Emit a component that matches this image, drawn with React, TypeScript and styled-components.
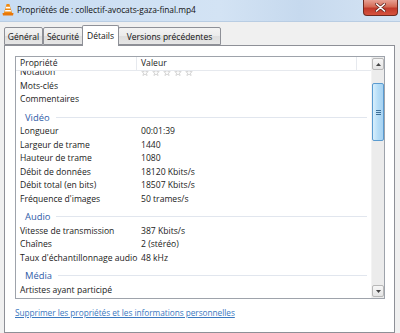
import styled, { createGlobalStyle } from 'styled-components';

const GlobalStyle = createGlobalStyle`
  html, body {
    margin: 0;
    padding: 0;
    background: #f0f0f0;
  }
  body {
    font-family: 'Open Sans', 'Segoe UI', sans-serif;
    color: #1a1a1a;
  }
`;

const Window = styled.div`
  width: 400px;
  height: 333px;
  overflow: hidden;
  display: flex;
  flex-direction: column;
  background: #f0f0f0;
`;

const TitleBar = styled.div`
  height: 21px;
  flex: none;
  display: flex;
  align-items: flex-start;
  background: linear-gradient(to right, #c8dcf2 0%, #d3e3f4 55%, #c6d9ee 75%, #d5e4f4 100%);
  border-bottom: 1px solid #b9cde3;
`;

const AppIcon = styled.svg`
  width: 12px;
  height: 13px;
  margin: 3px 3px 0 2px;
  flex: none;
`;

const Title = styled.div`
  font-size: 8.4px;
  letter-spacing: -0.05px;
  line-height: 20px;
  color: #111;
  flex: 1;
  white-space: nowrap;
`;

const CloseButton = styled.div`
  width: 35px;
  height: 16px;
  margin-right: 2px;
  border: 1px solid #6e2a20;
  border-top: none;
  border-radius: 0 0 4px 4px;
  background: linear-gradient(to bottom, #e7a194 0%, #d46a55 45%, #c1392a 55%, #d5533f 100%);
  display: flex;
  align-items: center;
  justify-content: center;
  box-sizing: border-box;
`;

const Body = styled.div`
  flex: 1;
  display: flex;
  flex-direction: column;
  padding: 3px 4px 0 4px;
  min-height: 0;
`;

const TabStrip = styled.div`
  display: flex;
  align-items: flex-end;
  height: 20px;
  flex: none;
  position: relative;
  z-index: 1;
`;

const Tab = styled.div<{ $active?: boolean; $width: number }>`
  box-sizing: border-box;
  width: ${({ $width }) => $width}px;
  height: ${({ $active }) => ($active ? '21px' : '18px')};
  margin-bottom: ${({ $active }) => ($active ? '-1px' : '0')};
  padding-top: ${({ $active }) => ($active ? '3px' : '2px')};
  margin-left: ${({ $active }) => ($active ? '-1px' : '0')};
  margin-right: ${({ $active }) => ($active ? '-1px' : '0')};
  border: 1px solid #8e9097;
  border-bottom: ${({ $active }) => ($active ? 'none' : '1px solid #8e9097')};
  border-radius: 2px 2px 0 0;
  background: ${({ $active }) =>
    $active ? '#ffffff' : 'linear-gradient(to bottom, #f3f3f3 0%, #ebebeb 50%, #dedede 51%, #e6e6e6 100%)'};
  font-size: 8.5px;
  line-height: 13px;
  text-align: center;
  color: #111;
  white-space: nowrap;
  position: relative;
  z-index: ${({ $active }) => ($active ? 2 : 1)};
`;

const TabPanel = styled.div`
  flex: 1;
  margin-right: 1px;
  background: #ffffff;
  border: 1px solid #8e9097;
  padding: 10px 9px 0 10px;
  display: flex;
  flex-direction: column;
`;

const ListView = styled.div`
  height: 243px;
  box-sizing: border-box;
  border: 1px solid #9ea3ab;
  display: flex;
  flex: none;
`;

const ListMain = styled.div`
  flex: 1;
  display: flex;
  flex-direction: column;
  min-width: 0;
`;

const Header = styled.div`
  height: 13px;
  flex: none;
  display: grid;
  grid-template-columns: 121px 220px;
  border-bottom: 1px solid #e6e9ee;
  background: #fff;
  position: relative;
  z-index: 1;
`;

const HeaderCell = styled.div`
  font-size: 8.6px;
  line-height: 13px;
  padding-left: 4px;
  border-right: 1px solid #e6e9ee;
  color: #222;
`;

const ListBody = styled.div`
  flex: 1;
  overflow: hidden;
`;

const ListContent = styled.div`
  margin-top: -5px;
`;

const Row = styled.div`
  height: 13.5px;
  display: grid;
  grid-template-columns: 121px 1fr;
  padding-left: 4px;
  font-size: 8.6px;
  line-height: 13.5px;
  color: #1a1a1a;
  white-space: nowrap;
`;

const Value = styled.div`
  display: flex;
  align-items: center;
  gap: 3px;
`;

const GroupRow = styled.div`
  height: 18.5px;
  box-sizing: border-box;
  padding: 4px 4px 0 9px;
  display: flex;
  align-items: flex-start;
`;

const GroupLabel = styled.span`
  font-size: 9.4px;
  line-height: 13px;
  color: #2f5ca8;
`;

const GroupLine = styled.div`
  flex: 1;
  height: 1px;
  margin: 6px 0 0 6px;
  background: #e1e6ee;
`;

const ScrollBar = styled.div`
  width: 13px;
  flex: none;
  background: #ececec;
  border-left: 1px solid #f3f3f3;
  display: flex;
  flex-direction: column;
  padding: 1px 0;
  box-sizing: border-box;
`;

const ScrollButton = styled.div`
  height: 12px;
  flex: none;
  box-sizing: border-box;
  border: 1px solid #b8b8b8;
  border-radius: 2px;
  background: linear-gradient(to bottom, #f7f7f7, #e4e4e4);
  display: flex;
  align-items: center;
  justify-content: center;
`;

const Track = styled.div`
  flex: 1;
  display: flex;
  flex-direction: column;
`;

const Thumb = styled.div`
  margin-top: 13px;
  height: 58px;
  box-sizing: border-box;
  border: 1px solid #5a9bd0;
  border-radius: 2px;
  background: linear-gradient(to right, #d8effc, #b5ddf7 50%, #a8d3f2);
  display: flex;
  flex-direction: column;
  align-items: center;
  justify-content: center;
  gap: 1px;
`;

const Grip = styled.div`
  width: 5px;
  height: 1px;
  background: #3e6f98;
`;

const Link = styled.a`
  margin-top: 7px;
  font-size: 8.3px;
  letter-spacing: -0.05px;
  line-height: 13px;
  color: #3a78bf;
  text-decoration: underline;
  white-space: nowrap;
`;

const Star = () => (
  <svg width="8" height="7" viewBox="0 0 10 9">
    <path
      d="M5 0.6 L6.2 3.3 L9.2 3.4 L6.8 5.3 L7.7 8.4 L5 6.7 L2.3 8.4 L3.2 5.3 L0.8 3.4 L3.8 3.3 Z"
      fill="#fafafa"
      stroke="#c9c9c9"
      strokeWidth="0.9"
    />
  </svg>
);

type Item = { kind: 'row'; label: string; value?: string; stars?: boolean } | { kind: 'group'; label: string };

const items: Item[] = [
  { kind: 'row', label: 'Notation', stars: true },
  { kind: 'row', label: 'Mots-clés' },
  { kind: 'row', label: 'Commentaires' },
  { kind: 'group', label: 'Vidéo' },
  { kind: 'row', label: 'Longueur', value: '00:01:39' },
  { kind: 'row', label: 'Largeur de trame', value: '1440' },
  { kind: 'row', label: 'Hauteur de trame', value: '1080' },
  { kind: 'row', label: 'Débit de données', value: '18120 Kbits/s' },
  { kind: 'row', label: 'Débit total (en bits)', value: '18507 Kbits/s' },
  { kind: 'row', label: "Fréquence d'images", value: '50 trames/s' },
  { kind: 'group', label: 'Audio' },
  { kind: 'row', label: 'Vitesse de transmission', value: '387 Kbits/s' },
  { kind: 'row', label: 'Chaînes', value: '2 (stéréo)' },
  { kind: 'row', label: "Taux d'échantillonnage audio", value: '48 kHz' },
  { kind: 'group', label: 'Média' },
  { kind: 'row', label: 'Artistes ayant participé' },
];

const App = () => {
  return (
    <Window>
      <GlobalStyle />
      <TitleBar>
        <AppIcon viewBox="0 0 12 13">
          <path d="M4.6 1 L7.4 1 L10 10 L2 10 Z" fill="#f08a10" />
          <path d="M4.1 3.8 L7.9 3.8 L8.4 5.6 L3.6 5.6 Z" fill="#ffffff" />
          <path d="M3.3 7 L8.7 7 L9.2 8.6 L2.8 8.6 Z" fill="#ffffff" />
          <path d="M0.5 10 L11.5 10 L11 12.5 L1 12.5 Z" fill="#e8770a" />
        </AppIcon>
        <Title>Propriétés de : collectif-avocats-gaza-final.mp4</Title>
        <CloseButton>
          <svg width="11" height="9" viewBox="0 0 11 9">
            <path d="M1.5 1 L9.5 8 M9.5 1 L1.5 8" stroke="#6b2a22" strokeWidth="3" strokeLinecap="round" />
            <path d="M1.5 1 L9.5 8 M9.5 1 L1.5 8" stroke="#ffffff" strokeWidth="1.6" strokeLinecap="round" />
          </svg>
        </CloseButton>
      </TitleBar>
      <Body>
        <TabStrip>
          <Tab $width={39}>Général</Tab>
          <Tab $width={40}>Sécurité</Tab>
          <Tab $width={37} $active>Détails</Tab>
          <Tab $width={103}>Versions précédentes</Tab>
        </TabStrip>
        <TabPanel>
          <ListView>
            <ListMain>
              <Header>
                <HeaderCell>Propriété</HeaderCell>
                <HeaderCell>Valeur</HeaderCell>
              </Header>
              <ListBody>
                <ListContent>
                  {items.map((item) =>
                    item.kind === 'group' ? (
                      <GroupRow key={item.label}>
                        <GroupLabel>{item.label}</GroupLabel>
                        <GroupLine />
                      </GroupRow>
                    ) : (
                      <Row key={item.label}>
                        <span>{item.label}</span>
                        <Value>
                          {item.stars ? [0, 1, 2, 3, 4].map((i) => <Star key={i} />) : item.value}
                        </Value>
                      </Row>
                    )
                  )}
                </ListContent>
              </ListBody>
            </ListMain>
            <ScrollBar>
              <ScrollButton>
                <svg width="5" height="3" viewBox="0 0 5 3">
                  <path d="M0 3 L2.5 0 L5 3 Z" fill="#444" />
                </svg>
              </ScrollButton>
              <Track>
                <Thumb>
                  <Grip />
                  <Grip />
                  <Grip />
                </Thumb>
              </Track>
              <ScrollButton>
                <svg width="5" height="3" viewBox="0 0 5 3">
                  <path d="M0 0 L5 0 L2.5 3 Z" fill="#444" />
                </svg>
              </ScrollButton>
            </ScrollBar>
          </ListView>
          <Link>Supprimer les propriétés et les informations personnelles</Link>
        </TabPanel>
      </Body>
    </Window>
  );
};

export default App;
